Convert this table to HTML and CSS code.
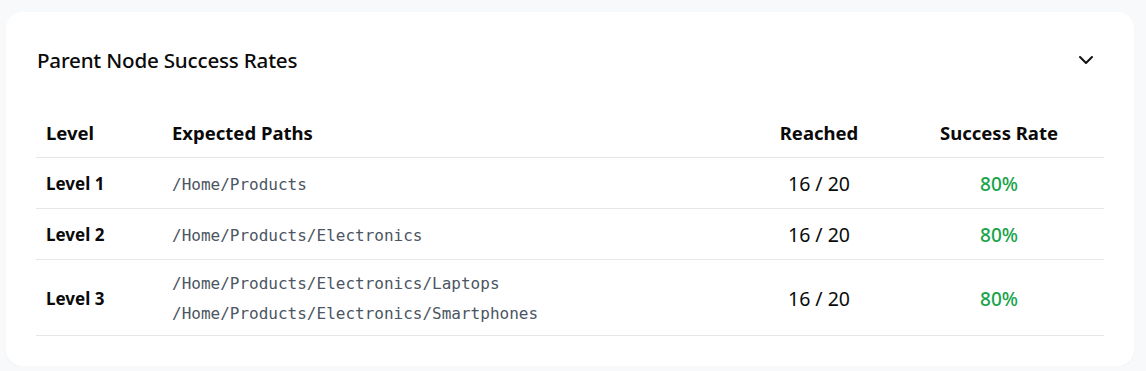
FILE: index.html
```html
<!DOCTYPE html>
<html lang="en">
<head>
<meta charset="utf-8">
<link rel="stylesheet" href="styles.css">
</head>
<body>
<section class="card">
  <header class="card-header">
    <h2 class="title">Parent Node Success Rates</h2>
    <button class="toggle" aria-label="Collapse">
      <svg width="24" height="24" viewBox="0 0 24 24" fill="none" stroke="currentColor" stroke-width="2" stroke-linecap="round" stroke-linejoin="round"><path d="m6 9 6 6 6-6"/></svg>
    </button>
  </header>
  <table class="rates">
    <colgroup>
      <col class="c-level"><col class="c-paths"><col class="c-reached"><col class="c-rate">
    </colgroup>
    <thead>
      <tr>
        <th class="left">Level</th>
        <th class="left">Expected Paths</th>
        <th>Reached</th>
        <th>Success Rate</th>
      </tr>
    </thead>
    <tbody>
      <tr>
        <td class="level">Level 1</td>
        <td class="paths"><div class="path">/Home/Products</div></td>
        <td class="num">16 / 20</td>
        <td class="rate">80%</td>
      </tr>
      <tr>
        <td class="level">Level 2</td>
        <td class="paths"><div class="path">/Home/Products/Electronics</div></td>
        <td class="num">16 / 20</td>
        <td class="rate">80%</td>
      </tr>
      <tr>
        <td class="level">Level 3</td>
        <td class="paths"><div class="path">/Home/Products/Electronics/Laptops</div><div class="path">/Home/Products/Electronics/Smartphones</div></td>
        <td class="num">16 / 20</td>
        <td class="rate">80%</td>
      </tr>
    </tbody>
  </table>
</section>
</body>
</html>
```

FILE: styles.css
```css
html, body {
  margin: 0;
  padding: 0;
}
body {
  background: #f8f9fb;
  padding: 12px 12px 0 6px;
  font-family: "Noto Sans", "Open Sans", sans-serif;
  color: #0a0a0a;
}
.card {
  background: #ffffff;
  border-radius: 16px;
  padding: 30px 30px 30px 30px;
  box-shadow: 0 1px 2px rgba(15, 23, 42, 0.04);
}
.card-header {
  display: flex;
  align-items: center;
  justify-content: space-between;
  height: 36px;
}
.title {
  margin: 0;
  font-size: 20.6px;
  font-weight: 500;
  line-height: 28px;
  padding-left: 1px;
  letter-spacing: -0.2px;
}
.toggle {
  border: 0;
  background: none;
  padding: 0;
  margin-right: 6px;
  width: 24px;
  height: 24px;
  color: #111;
  display: flex;
}
.rates {
  width: 100%;
  margin-top: 29px;
  border-collapse: collapse;
  table-layout: fixed;
}
.c-level { width: 126px; }
.c-reached { width: 150px; }
.c-rate { width: 210px; }
th, td {
  padding: 13px 10px 11px;
  line-height: 26px;
  border-bottom: 1px solid #e5e7eb;
  vertical-align: middle;
}
th {
  font-size: 18.5px;
  font-weight: 700;
  text-align: center;
}
th.left { text-align: left; }
td {
  font-size: 17px;
}
.level { font-weight: 700; }
.paths {
  font-family: "DejaVu Sans Mono", "Liberation Mono", monospace;
  font-size: 16px;
  color: #4b5563;
}
.paths .path { line-height: 21px; }
.paths .path + .path { margin-top: 9px; }
.num {
  text-align: center;
  font-size: 19.5px;
}
.rate {
  text-align: center;
  font-size: 19px;
  color: #16a34a;
  font-weight: 500;
}
```
